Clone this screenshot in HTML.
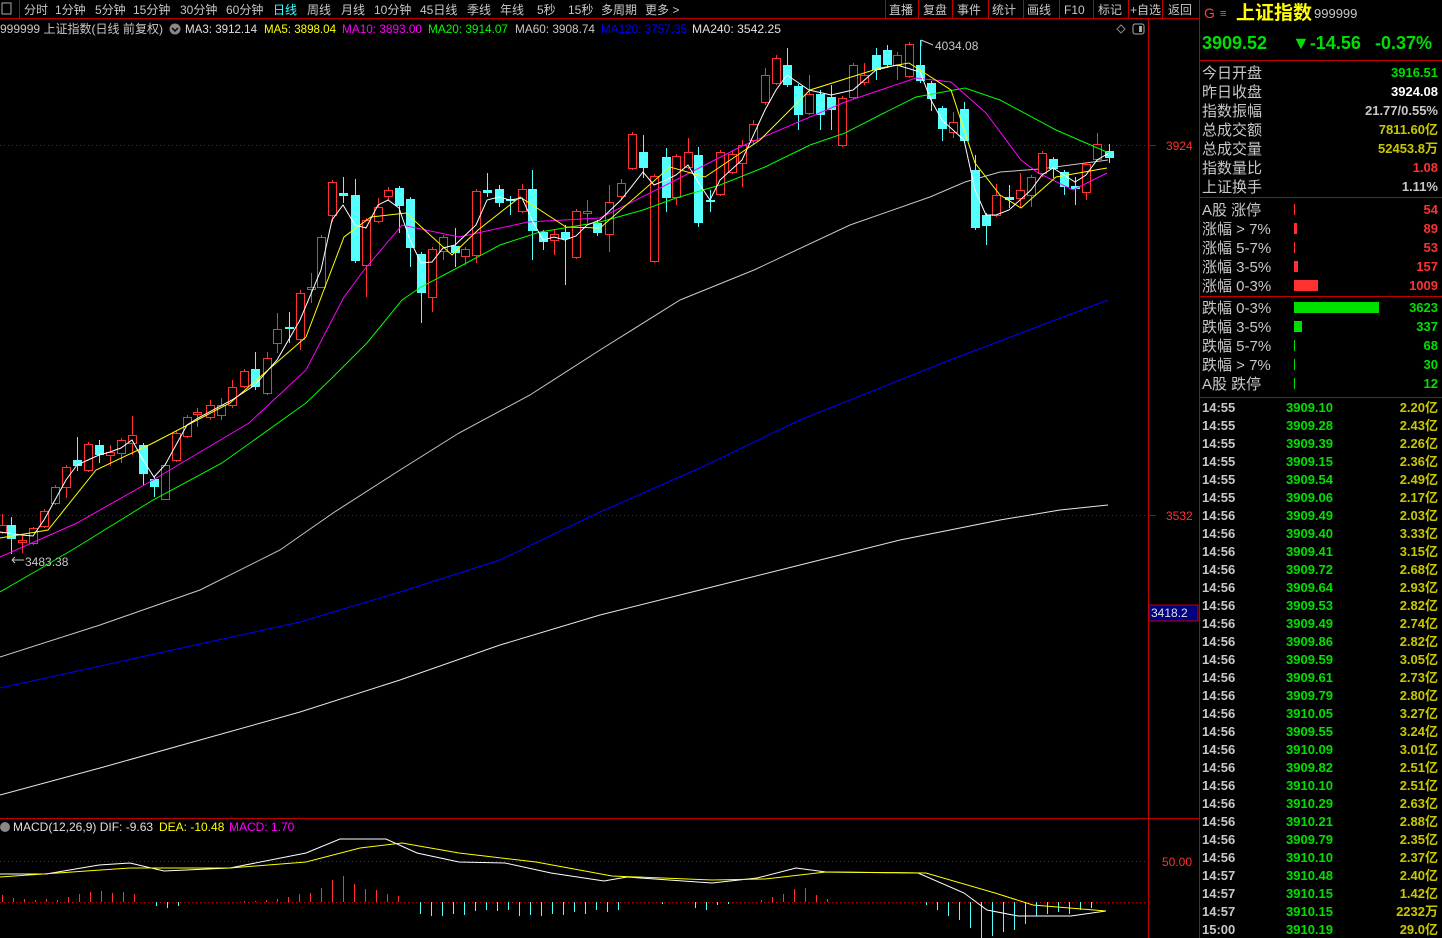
<!DOCTYPE html>
<html><head><meta charset="utf-8">
<style>
html,body{margin:0;padding:0;background:#000;width:1442px;height:938px;overflow:hidden}
svg{display:block}
text{font-family:"Liberation Sans","Noto Sans CJK SC",sans-serif}
</style></head><body>
<svg width="1442" height="938" viewBox="0 0 1442 938" xmlns="http://www.w3.org/2000/svg">
<rect width="1442" height="938" fill="#000"/>
<g stroke="#c00000" stroke-width="1" fill="none">
<line x1="0" y1="18.5" x2="1199" y2="18.5"/>
<line x1="1148.5" y1="18" x2="1148.5" y2="938"/>
<line x1="1199.5" y1="0" x2="1199.5" y2="938"/>
<line x1="0" y1="818.5" x2="1199" y2="818.5"/>
<line x1="1200" y1="60.5" x2="1442" y2="60.5"/>
<line x1="1200" y1="197.5" x2="1442" y2="197.5"/>
<line x1="1200" y1="296.5" x2="1442" y2="296.5"/>
<line x1="1200" y1="397.5" x2="1442" y2="397.5"/>
<line x1="19.5" y1="0" x2="19.5" y2="18"/>
<line x1="885.5" y1="0" x2="885.5" y2="18"/>
<line x1="918.5" y1="0" x2="918.5" y2="18"/>
<line x1="952.5" y1="0" x2="952.5" y2="18"/>
<line x1="988.5" y1="0" x2="988.5" y2="18"/>
<line x1="1023.5" y1="0" x2="1023.5" y2="18"/>
<line x1="1059.5" y1="0" x2="1059.5" y2="18"/>
<line x1="1093.5" y1="0" x2="1093.5" y2="18"/>
<line x1="1128.5" y1="0" x2="1128.5" y2="18"/>
<line x1="1162.5" y1="0" x2="1162.5" y2="18"/>
</g>
<g stroke="#c00000" stroke-dasharray="1,3">
<line x1="0" y1="145.5" x2="1148" y2="145.5"/>
<line x1="0" y1="515.5" x2="1148" y2="515.5"/>
<line x1="0" y1="861.5" x2="1148" y2="861.5"/>
<line x1="0" y1="902.5" x2="1148" y2="902.5"/>
</g>
<line x1="1148" y1="145.5" x2="1156" y2="145.5" stroke="#c00000"/>
<line x1="1148" y1="515.5" x2="1156" y2="515.5" stroke="#c00000"/>
<rect x="2" y="3" width="9" height="11" fill="none" stroke="#aaa"/>
<g font-size="12" fill="#c8c8c8">
<text x="24" y="14">分时</text><text x="55" y="14">1分钟</text><text x="95" y="14">5分钟</text>
<text x="133" y="14">15分钟</text><text x="180" y="14">30分钟</text><text x="226" y="14">60分钟</text>
<text x="273" y="14" fill="#40ffff">日线</text><text x="307" y="14">周线</text><text x="341" y="14">月线</text>
<text x="374" y="14">10分钟</text><text x="420" y="14">45日线</text><text x="467" y="14">季线</text>
<text x="500" y="14">年线</text><text x="537" y="14">5秒</text><text x="568" y="14">15秒</text>
<text x="601" y="14">多周期</text><text x="645" y="14">更多 &gt;</text>
<text x="889" y="14">直播</text><text x="923" y="14">复盘</text><text x="957" y="14">事件</text>
<text x="992" y="14">统计</text><text x="1027" y="14">画线</text><text x="1064" y="14">F10</text>
<text x="1098" y="14">标记</text><text x="1130" y="14">+自选</text><text x="1168" y="14">返回</text>
</g>
<g font-size="12">
<text x="0" y="33" fill="#c8c8c8" textLength="163" lengthAdjust="spacingAndGlyphs">999999 上证指数(日线 前复权)</text>
<circle cx="175" cy="29" r="5.5" fill="#888"/>
<path d="M172 28 L175 31 L178 28" stroke="#000" stroke-width="1.5" fill="none"/>
<text x="185" y="33" fill="#e0e0e0" textLength="72" lengthAdjust="spacingAndGlyphs">MA3: 3912.14</text>
<text x="264" y="33" fill="#ffff00" textLength="72" lengthAdjust="spacingAndGlyphs">MA5: 3898.04</text>
<text x="342" y="33" fill="#ff00ff" textLength="80" lengthAdjust="spacingAndGlyphs">MA10: 3893.00</text>
<text x="428" y="33" fill="#00ff00" textLength="80" lengthAdjust="spacingAndGlyphs">MA20: 3914.07</text>
<text x="515" y="33" fill="#c8c8c8" textLength="80" lengthAdjust="spacingAndGlyphs">MA60: 3908.74</text>
<text x="601" y="33" fill="#0000ff" textLength="86" lengthAdjust="spacingAndGlyphs">MA120: 3757.35</text>
<text x="692" y="33" fill="#e0e0e0" textLength="89" lengthAdjust="spacingAndGlyphs">MA240: 3542.25</text>
</g>
<path d="M1121 25 L1125 29 L1121 33 L1117 29 Z" stroke="#888" fill="none"/>
<rect x="1133" y="24" width="11" height="10" rx="2" fill="none" stroke="#aaa"/><rect x="1139" y="26" width="3" height="6" fill="#aaa"/>
<g font-size="12">
<text x="1166" y="150" fill="#ff3030">3924</text>
<text x="1166" y="520" fill="#ff3030">3532</text>
<text x="1162" y="866" fill="#ff3030">50.00</text>
</g>
<rect x="1149" y="605" width="49" height="16" fill="#000080" stroke="#c00000"/>
<text x="1151" y="617" font-size="12" fill="#e0e0e0">3418.2</text>
<text x="935" y="50" font-size="12" fill="#c8c8c8">4034.08</text>
<path d="M921 40 L921 46 M921 40 L933 45" stroke="#c8c8c8" fill="none"/>
<text x="25" y="566" font-size="12" fill="#c8c8c8">3483.38</text>
<path d="M12 560 L24 560 M12 560 L15 557 M12 560 L15 563" stroke="#c8c8c8" fill="none"/>
<polyline fill="none" stroke="#c8c8c8" points="0,657 100,625 200,590 280,550 333,513 400,470 459,433 530,395 600,350 680,300 754,270 850,225 930,197 965,182 1000,172 1040,169 1108,160"/>
<polyline fill="none" stroke="#0000ff" points="0,688 150,655 300,622 400,592 500,560 600,512 700,468 800,420 950,360 1108,300"/>
<polyline fill="none" stroke="#e8e8e8" points="0,795 100,768 200,740 300,712 400,680 500,645 600,615 700,590 800,565 900,540 1000,520 1060,510 1108,505"/>
<path fill="none" stroke="#ff3232" d="M2.5 514V534M22.5 535V553M33.5 527V545M44.5 509V528M55.5 485V505M66.5 465V498M88.5 442V472M110.5 445V466M121.5 438V463M132.5 416V455M165.5 463V500M176.5 431V462M187.5 415V438M197.5 408V427M210.5 400V420M221.5 398V420M232.5 380V408M244.5 369V388M267.5 352V395M277.5 313V353M300.5 290V350M311.5 273V303M321.5 235V288M332.5 180V222M366.5 218V297M378.5 198V223M388.5 187V200M432.5 247V312M443.5 235V260M465.5 247V265M476.5 189V263M522.5 184V213M554.5 230V255M576.5 209V259M587.5 200V223M609.5 185V252M621.5 179V199M632.5 132V170M654.5 174V263M676.5 154V205M688.5 138V169M720.5 150V196M732.5 150V174M742.5 140V187M753.5 120V145M765.5 68V105M776.5 55V85M809.5 75V115M842.5 96V147M853.5 63V99M864.5 63V85M897.5 52V80M909.5 42V78M953.5 112V138M996.5 184V217M1020.5 173V208M1031.5 175V207M1042.5 151V177M1086.5 162V200M1097.5 133V161"/>
<path fill="none" stroke="#54ffff" d="M11.5 517V554M77.5 437V471M99.5 440V463M143.5 443V485M154.5 477V497M255.5 352V390M289.5 312V343M343.5 177V203M355.5 179V263M399.5 186V233M410.5 197V267M421.5 252V323M455.5 228V267M487.5 173V197M499.5 185V207M510.5 196V215M532.5 170V260M543.5 230V250M565.5 225V285M597.5 220V236M643.5 135V178M666.5 148V212M698.5 147V227M710.5 190V212M787.5 48V87M798.5 84V130M820.5 90V130M831.5 85V130M876.5 48V80M887.5 45V68M920.5 40V83M931.5 81V111M942.5 106V141M964.5 102V143M975.5 155V230M986.5 213V245M1009.5 185V208M1053.5 157V178M1064.5 170V195M1075.5 177V205M1109.5 144V163"/>
<g fill="#000" stroke="#ff3232">
<rect x="-1.5" y="525.5" width="8" height="7"/><rect x="18.5" y="540.5" width="8" height="2"/><rect x="29.5" y="528.5" width="8" height="15"/>
<rect x="40.5" y="511.5" width="8" height="15"/><rect x="51.5" y="487.5" width="8" height="16"/><rect x="62.5" y="467.5" width="8" height="20"/>
<rect x="84.5" y="444.5" width="8" height="26"/><rect x="106.5" y="452.5" width="8" height="3"/><rect x="117.5" y="440.5" width="8" height="13"/>
<rect x="128.5" y="435.5" width="8" height="8"/><rect x="161.5" y="465.5" width="8" height="34"/><rect x="172.5" y="433.5" width="8" height="27"/>
<rect x="183.5" y="417.5" width="8" height="19"/><rect x="193.5" y="412.5" width="8" height="2"/><rect x="206.5" y="405.5" width="8" height="12"/>
<rect x="217.5" y="405.5" width="8" height="10"/><rect x="228.5" y="387.5" width="8" height="18"/><rect x="240.5" y="371.5" width="8" height="15"/>
<rect x="263.5" y="358.5" width="8" height="35"/><rect x="273.5" y="329.5" width="8" height="14"/><rect x="296.5" y="293.5" width="8" height="46"/>
<rect x="307.5" y="287.5" width="8" height="2"/><rect x="317.5" y="237.5" width="8" height="50"/><rect x="328.5" y="182.5" width="8" height="33"/>
<rect x="362.5" y="220.5" width="8" height="45"/><rect x="374.5" y="207.5" width="8" height="14"/><rect x="384.5" y="190.5" width="8" height="6"/>
<rect x="428.5" y="249.5" width="8" height="48"/><rect x="439.5" y="237.5" width="8" height="14"/><rect x="461.5" y="249.5" width="8" height="7"/>
<rect x="472.5" y="191.5" width="8" height="64"/><rect x="518.5" y="189.5" width="8" height="22"/><rect x="550.5" y="234.5" width="8" height="6"/>
<rect x="572.5" y="211.5" width="8" height="46"/><rect x="583.5" y="211.5" width="8" height="2"/><rect x="605.5" y="202.5" width="8" height="32"/>
<rect x="617.5" y="183.5" width="8" height="13"/><rect x="628.5" y="134.5" width="8" height="34"/><rect x="650.5" y="176.5" width="8" height="85"/>
<rect x="672.5" y="156.5" width="8" height="41"/><rect x="684.5" y="152.5" width="8" height="15"/><rect x="716.5" y="152.5" width="8" height="42"/>
<rect x="728.5" y="154.5" width="8" height="18"/><rect x="738.5" y="145.5" width="8" height="18"/><rect x="749.5" y="124.5" width="8" height="16"/>
<rect x="761.5" y="75.5" width="8" height="27"/><rect x="772.5" y="58.5" width="8" height="25"/><rect x="805.5" y="94.5" width="8" height="19"/>
<rect x="838.5" y="98.5" width="8" height="47"/><rect x="849.5" y="65.5" width="8" height="32"/><rect x="860.5" y="75.5" width="8" height="7"/>
<rect x="893.5" y="55.5" width="8" height="10"/><rect x="905.5" y="44.5" width="8" height="32"/><rect x="949.5" y="122.5" width="8" height="10"/>
<rect x="992.5" y="195.5" width="8" height="20"/><rect x="1016.5" y="190.5" width="8" height="8"/><rect x="1027.5" y="177.5" width="8" height="18"/>
<rect x="1038.5" y="153.5" width="8" height="20"/><rect x="1082.5" y="164.5" width="8" height="28"/><rect x="1093.5" y="144.5" width="8" height="15"/>
</g>
<g fill="#54ffff">
<rect x="7" y="525" width="9" height="14"/><rect x="73" y="460" width="9" height="6"/><rect x="95" y="445" width="9" height="10"/>
<rect x="139" y="445" width="9" height="29"/><rect x="150" y="479" width="9" height="8"/><rect x="251" y="369" width="9" height="18"/>
<rect x="285" y="327" width="9" height="2"/><rect x="339" y="193" width="9" height="3"/><rect x="351" y="195" width="9" height="66"/>
<rect x="395" y="188" width="9" height="18"/><rect x="406" y="199" width="9" height="49"/><rect x="417" y="254" width="9" height="39"/>
<rect x="451" y="246" width="9" height="7"/><rect x="483" y="190" width="9" height="3"/><rect x="495" y="189" width="9" height="14"/>
<rect x="506" y="199" width="9" height="2"/><rect x="528" y="189" width="9" height="42"/><rect x="539" y="232" width="9" height="10"/>
<rect x="561" y="232" width="9" height="7"/><rect x="593" y="223" width="9" height="10"/><rect x="639" y="152" width="9" height="16"/>
<rect x="662" y="157" width="9" height="41"/><rect x="694" y="155" width="9" height="68"/><rect x="706" y="200" width="9" height="2"/>
<rect x="783" y="65" width="9" height="20"/><rect x="794" y="86" width="9" height="29"/><rect x="816" y="94" width="9" height="21"/>
<rect x="827" y="97" width="9" height="13"/><rect x="872" y="55" width="9" height="15"/><rect x="883" y="50" width="9" height="15"/>
<rect x="916" y="65" width="9" height="16"/><rect x="927" y="83" width="9" height="16"/><rect x="938" y="108" width="9" height="21"/>
<rect x="960" y="109" width="9" height="32"/><rect x="971" y="170" width="9" height="58"/><rect x="982" y="215" width="9" height="11"/>
<rect x="1005" y="197" width="9" height="3"/><rect x="1049" y="159" width="9" height="10"/><rect x="1060" y="172" width="9" height="15"/>
<rect x="1071" y="186" width="9" height="3"/><rect x="1105" y="151" width="9" height="7"/>
</g>
<polyline fill="none" stroke="#00ff00" points="0,592 38,570 77,547 153,500 222,463 306,403 333,377 367,343 402,300 421,287 459,267 500,245 540,232 600,222 643,210 676,198 720,185 765,167 810,145 845,133 880,115 916,97 965,88 1000,100 1056,130 1109,153"/>
<polyline fill="none" stroke="#ff00ff" points="0,557 77,523 153,480 249,423 306,370 344,297 364,270 402,225 459,237 528,222 600,218 670,183 740,147 845,102 916,78 951,82 986,113 1021,160 1038,173 1073,190 1107,173"/>
<polyline fill="none" stroke="#ffff00" points="0,538 48,530 96,470 153,443 230,403 306,337 344,237 371,217 406,213 452,255 478,230 520,197 566,227 600,228 670,167 705,177 760,140 810,90 880,68 909,63 951,90 975,163 1000,195 1021,208 1056,177 1107,168"/>
<polyline fill="none" stroke="#ffffff" points="0,532 22,535 33,536 44,520 55,500 66,480 77,465 88,460 99,455 110,452 121,448 132,440 143,460 154,477 165,465 176,445 187,425 198,418 232,400 255,385 277,360 300,320 321,270 332,220 343,205 355,225 366,228 378,205 388,200 399,208 410,240 421,263 432,262 443,248 455,245 476,225 487,200 499,197 510,200 522,198 532,220 543,240 554,237 565,240 576,236 587,225 600,220 621,200 643,172 654,185 666,180 676,175 688,165 698,182 710,200 720,180 742,160 765,110 776,90 787,75 809,90 831,95 853,90 876,70 897,65 920,72 931,100 942,120 953,130 964,140 975,190 986,215 996,215 1009,210 1031,190 1042,175 1053,168 1064,175 1075,182 1086,175 1097,160 1109,153"/>
<circle cx="5" cy="827" r="5" fill="#888"/>
<g font-size="12">
<text x="13" y="831" fill="#e0e0e0">MACD(12,26,9)  DIF: -9.63</text>
<text x="159" y="831" fill="#ffff00">DEA: -10.48</text>
<text x="229" y="831" fill="#ff00ff">MACD: 1.70</text>
</g>
<path fill="none" stroke="#ff3232" d="M2.5 902v-7M13.5 902v-4M24.5 902v-3M35.5 902v-2M46.5 902v-3M57.5 902v-2M68.5 902v-5M79.5 902v-8M90.5 902v-10M101.5 902v-11M112.5 902v-9M123.5 902v-10M134.5 902v-8M244.5 902v-1M255.5 902v-1M266.5 902v-2M277.5 902v-3M288.5 902v-5M299.5 902v-8M310.5 902v-9M321.5 902v-14M332.5 902v-22M343.5 902v-26M354.5 902v-18M365.5 902v-13M376.5 902v-12M387.5 902v-8M398.5 902v-6M761.5 902v-2M772.5 902v-5M783.5 902v-8M794.5 902v-13M805.5 902v-14M816.5 902v-7M827.5 902v-3"/>
<path fill="none" stroke="#54ffff" d="M156.5 902v4M167.5 902v6M178.5 902v4M420.5 902v12M431.5 902v14M442.5 902v14M453.5 902v12M464.5 902v13M475.5 902v9M486.5 902v8M497.5 902v9M508.5 902v8M519.5 902v14M530.5 902v13M541.5 902v14M552.5 902v12M563.5 902v13M574.5 902v10M585.5 902v12M596.5 902v8M607.5 902v10M618.5 902v8M662.5 902v2M695.5 902v6M706.5 902v8M717.5 902v3M728.5 902v2M926.5 902v3M937.5 902v8M948.5 902v14M959.5 902v18M970.5 902v26M981.5 902v36M992.5 902v34M1003.5 902v30M1014.5 902v28M1025.5 902v22M1036.5 902v14M1047.5 902v12M1058.5 902v10M1069.5 902v12M1080.5 902v8M1091.5 902v6"/>
<polyline fill="none" stroke="#ffffff" points="0,874 46,874 99,865 130,863 164,871 230,868 306,853 340,839 386,839 417,853 459,862 505,863 551,873 604,881 627,877 712,883 757,878 796,868 826,872 918,873 964,893 987,910 1018,916 1071,916 1106,911"/>
<polyline fill="none" stroke="#ffff00" points="0,877 130,868 230,868 306,862 360,848 402,843 459,853 536,862 612,876 712,880 765,879 826,872 926,873 995,893 1033,905 1106,911"/>
<text x="1204" y="18" font-size="14" fill="#ff4040">G</text>
<text x="1220" y="17" font-size="11" fill="#00e000">≡</text>
<text x="1236" y="19" font-size="19" font-weight="bold" fill="#ffff00" font-family="Noto Sans CJK SC,sans-serif">上证指数</text>
<text x="1314" y="18" font-size="13" fill="#c8c8c8">999999</text>
<g font-size="18" font-weight="bold" fill="#00e000">
<text x="1202" y="49">3909.52</text>
<text x="1292" y="49">▼-14.56</text>
<text x="1375" y="49">-0.37%</text>
</g>
<g font-size="15" fill="#c8c8c8" font-family="Noto Sans CJK SC,sans-serif">
<text x="1202" y="78">今日开盘</text><text x="1202" y="97">昨日收盘</text><text x="1202" y="116">指数振幅</text>
<text x="1202" y="135">总成交额</text><text x="1202" y="154">总成交量</text><text x="1202" y="173">指数量比</text>
<text x="1202" y="192">上证换手</text>
<text x="1202" y="215">A股 涨停</text><text x="1202" y="234">涨幅 &gt; 7%</text><text x="1202" y="253">涨幅 5-7%</text>
<text x="1202" y="272">涨幅 3-5%</text><text x="1202" y="291">涨幅 0-3%</text>
<text x="1202" y="313">跌幅 0-3%</text><text x="1202" y="332">跌幅 3-5%</text><text x="1202" y="351">跌幅 5-7%</text>
<text x="1202" y="370">跌幅 &gt; 7%</text><text x="1202" y="389">A股 跌停</text>
</g>
<g font-size="13" font-weight="bold" text-anchor="end">
<text x="1438" y="77" fill="#00e000">3916.51</text>
<text x="1438" y="96" fill="#ffffff">3924.08</text>
<text x="1438" y="115" fill="#c8c8c8">21.77/0.55%</text>
<text x="1438" y="134" fill="#c8c800">7811.60亿</text>
<text x="1438" y="153" fill="#c8c800">52453.8万</text>
<text x="1438" y="172" fill="#ff3030">1.08</text>
<text x="1438" y="191" fill="#c8c8c8">1.11%</text>
<text x="1438" y="214" fill="#ff3030">54</text><text x="1438" y="233" fill="#ff3030">89</text>
<text x="1438" y="252" fill="#ff3030">53</text><text x="1438" y="271" fill="#ff3030">157</text>
<text x="1438" y="290" fill="#ff3030">1009</text>
<text x="1438" y="312" fill="#00e000">3623</text><text x="1438" y="331" fill="#00e000">337</text>
<text x="1438" y="350" fill="#00e000">68</text><text x="1438" y="369" fill="#00e000">30</text>
<text x="1438" y="388" fill="#00e000">12</text>
</g>
<g fill="#ff3030">
<rect x="1294" y="204" width="1" height="11"/><rect x="1294" y="223" width="3" height="11"/>
<rect x="1294" y="242" width="1" height="11"/><rect x="1294" y="261" width="4" height="11"/>
<rect x="1294" y="280" width="24" height="11"/>
</g>
<g fill="#00e000">
<rect x="1294" y="302" width="85" height="11"/><rect x="1294" y="321" width="8" height="11"/>
<rect x="1294" y="340" width="1" height="11"/><rect x="1294" y="359" width="1" height="11"/>
<rect x="1294" y="378" width="1" height="11"/>
</g>
<g font-size="13" font-weight="bold">
<g fill="#c8c8c8">
<text x="1202" y="412">14:55</text><text x="1202" y="430">14:55</text><text x="1202" y="448">14:55</text><text x="1202" y="466">14:55</text><text x="1202" y="484">14:55</text><text x="1202" y="502">14:55</text>
<text x="1202" y="520">14:56</text><text x="1202" y="538">14:56</text><text x="1202" y="556">14:56</text><text x="1202" y="574">14:56</text><text x="1202" y="592">14:56</text><text x="1202" y="610">14:56</text>
<text x="1202" y="628">14:56</text><text x="1202" y="646">14:56</text><text x="1202" y="664">14:56</text><text x="1202" y="682">14:56</text><text x="1202" y="700">14:56</text><text x="1202" y="718">14:56</text>
<text x="1202" y="736">14:56</text><text x="1202" y="754">14:56</text><text x="1202" y="772">14:56</text><text x="1202" y="790">14:56</text><text x="1202" y="808">14:56</text><text x="1202" y="826">14:56</text>
<text x="1202" y="844">14:56</text><text x="1202" y="862">14:56</text><text x="1202" y="880">14:57</text><text x="1202" y="898">14:57</text><text x="1202" y="916">14:57</text><text x="1202" y="934">15:00</text>
</g>
<g fill="#00e000">
<text x="1286" y="412">3909.10</text><text x="1286" y="430">3909.28</text><text x="1286" y="448">3909.39</text><text x="1286" y="466">3909.15</text><text x="1286" y="484">3909.54</text><text x="1286" y="502">3909.06</text>
<text x="1286" y="520">3909.49</text><text x="1286" y="538">3909.40</text><text x="1286" y="556">3909.41</text><text x="1286" y="574">3909.72</text><text x="1286" y="592">3909.64</text><text x="1286" y="610">3909.53</text>
<text x="1286" y="628">3909.49</text><text x="1286" y="646">3909.86</text><text x="1286" y="664">3909.59</text><text x="1286" y="682">3909.61</text><text x="1286" y="700">3909.79</text><text x="1286" y="718">3910.05</text>
<text x="1286" y="736">3909.55</text><text x="1286" y="754">3910.09</text><text x="1286" y="772">3909.82</text><text x="1286" y="790">3910.10</text><text x="1286" y="808">3910.29</text><text x="1286" y="826">3910.21</text>
<text x="1286" y="844">3909.79</text><text x="1286" y="862">3910.10</text><text x="1286" y="880">3910.48</text><text x="1286" y="898">3910.15</text><text x="1286" y="916">3910.15</text><text x="1286" y="934">3910.19</text>
</g>
<g fill="#c8c800" text-anchor="end">
<text x="1438" y="412">2.20亿</text><text x="1438" y="430">2.43亿</text><text x="1438" y="448">2.26亿</text><text x="1438" y="466">2.36亿</text><text x="1438" y="484">2.49亿</text><text x="1438" y="502">2.17亿</text>
<text x="1438" y="520">2.03亿</text><text x="1438" y="538">3.33亿</text><text x="1438" y="556">3.15亿</text><text x="1438" y="574">2.68亿</text><text x="1438" y="592">2.93亿</text><text x="1438" y="610">2.82亿</text>
<text x="1438" y="628">2.74亿</text><text x="1438" y="646">2.82亿</text><text x="1438" y="664">3.05亿</text><text x="1438" y="682">2.73亿</text><text x="1438" y="700">2.80亿</text><text x="1438" y="718">3.27亿</text>
<text x="1438" y="736">3.24亿</text><text x="1438" y="754">3.01亿</text><text x="1438" y="772">2.51亿</text><text x="1438" y="790">2.51亿</text><text x="1438" y="808">2.63亿</text><text x="1438" y="826">2.88亿</text>
<text x="1438" y="844">2.35亿</text><text x="1438" y="862">2.37亿</text><text x="1438" y="880">2.40亿</text><text x="1438" y="898">1.42亿</text><text x="1438" y="916">2232万</text><text x="1438" y="934">29.0亿</text>
</g>
</g>
</svg>
</body></html>
